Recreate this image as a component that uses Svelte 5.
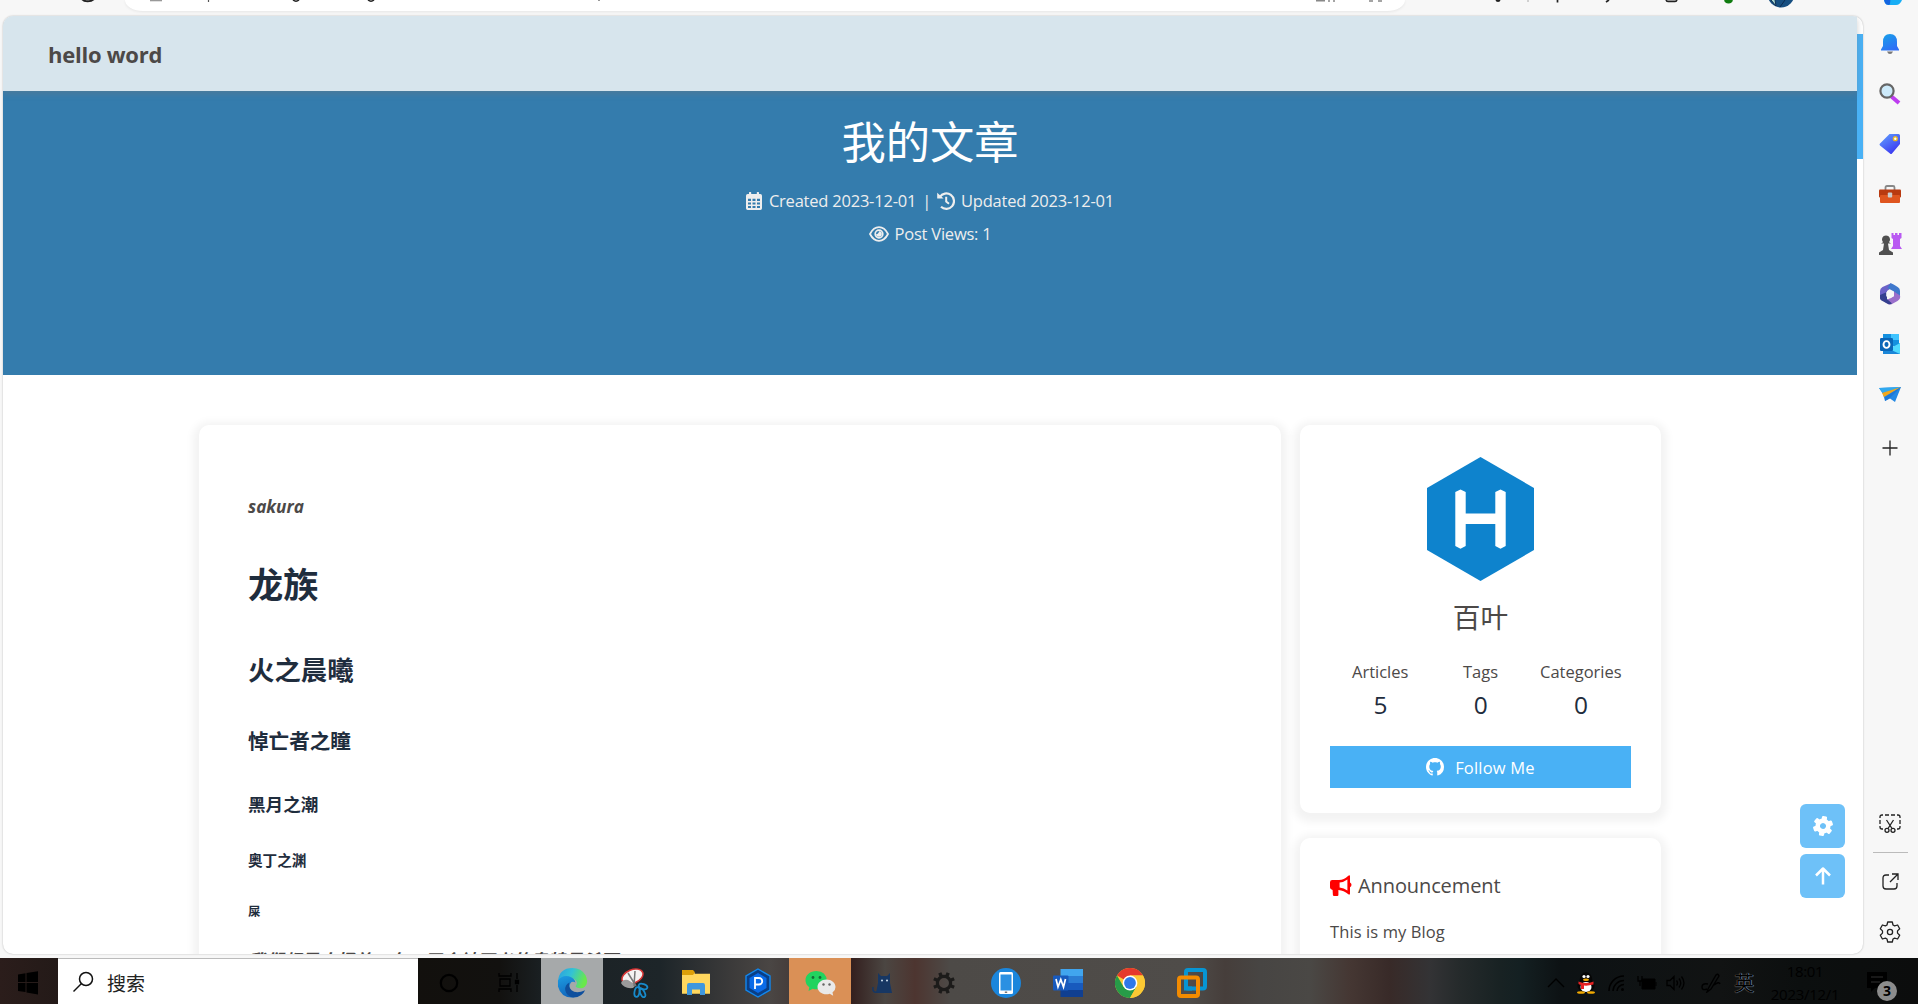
<script>
  const headings = [
    { text: '龙族', level: 'h-1' },
    { text: '火之晨曦', level: 'h-2' },
    { text: '悼亡者之瞳', level: 'h-3' },
    { text: '黑月之潮', level: 'h-4' },
    { text: '奥丁之渊', level: 'h-5' },
    { text: '屎', level: 'h-6' },
  ];
  const stats = [
    { label: 'Articles', value: 5 },
    { label: 'Tags', value: 0 },
    { label: 'Categories', value: 0 },
  ];
  const teeth6 = [0, 60, 120, 180, 240, 300];
  const teeth8 = [0, 45, 90, 135, 180, 225, 270, 315];
</script>

<div class="screen">
  <!-- lower edge of the browser toolbar -->
  <div class="toolbar">
    <svg class="left-tools" width="125" height="16" viewBox="0 0 125 16">
      <path d="M82 -1C84 2 91 2 94 -1" fill="none" stroke="#222" stroke-width="2" />
    </svg>
    <div class="address">
      <svg width="1280" height="11" viewBox="2 0 1280 11">
        <path d="M27 .5h12" stroke="#999" stroke-width="1.6" />
        <path d="M85.500 0v2M476 0v1" stroke="#555" stroke-width="1.200" />
        <path d="M170 0q3 2.500 6 0M245 0q3 2.500 6 0" stroke="#222" stroke-width="1.500" fill="none" />
        <path d="M1193 .8h9M1206 0v2M1211 0v2M1246 1h4M1255 1h4" stroke="#888" stroke-width="1.500" />
      </svg>
    </div>
    <svg class="right-tools" width="513" height="16" viewBox="1405 0 513 16">
      <circle cx="1498" cy="-.5" r="2.500" fill="#222" />
      <path d="M1528 0v2" stroke="#aaa" />
      <path d="M1557.500 0v2.500M1606 2l3-2" stroke="#222" stroke-width="1.700" />
      <path d="M1666 -1q0 2.500 2 2.500h7q2 0 2-2.500" fill="#bbb" stroke="#222" stroke-width="1.500" />
      <circle cx="1728.500" cy="-1" r="4.500" fill="#107c10" />
      <circle cx="1781" cy="-6" r="13.500" fill="#164e80" />
      <path d="M1771 0l5 6l-1-6M1780 7l5-7" fill="#a8d5d0" stroke="#0b2c50" />
      <path d="M1883 -3l2 6q1 2 4 2h7q4 0 6-5l1-3z" fill="#18aef5" />
      <path d="M1883 -3l2 6q1 2 4 2q2-1 1-8z" fill="#1565e0" />
    </svg>
  </div>

  <div class="middle">
    <div class="page">
      <div class="viewport">
        <nav>hello word</nav>
        <header>
          <h1>我的文章</h1>
          <div class="meta">
            <svg class="cal" width="16" height="18" viewBox="0 0 16 18">
              <path fill="#eee" fill-rule="evenodd" d="M1.700 2H3V.6q0-.6.6-.6h1q.6 0 .6.600V2h5.600V.6q0-.6.6-.6h1q.6 0 .6.600V2h1.300Q16 2 16 3.700v12.600Q16 18 14.300 18H1.700Q0 18 0 16.300V3.700Q0 2 1.700 2zM2 6.800v2.200h3V6.800zm4.500 0v2.200h3V6.800zm4.500 0v2.200h3V6.800zM2 10.400v2.200h3v-2.200zm4.500 0v2.200h3v-2.200zm4.500 0v2.200h3v-2.200zM2 14v2h3v-2zm4.500 0v2h3v-2zm4.500 0v2h3v-2z" />
            </svg>
            <span class="created">Created 2023-12-01</span>
            <span class="bar">|</span>
            <svg class="hist" width="18" height="18" viewBox="0 0 18 18" fill="none" stroke="#eee" stroke-width="2.200">
              <path d="M2.800 5A7.700 7.700 0 1 1 4 14.800" />
              <path d="M9.200 4.800V9.500l2.800 2.200" stroke-width="2" />
              <path d="M.2.800L6.600 6.600H.2z" fill="#eee" stroke="none" />
            </svg>
            <span class="updated">Updated 2023-12-01</span>
          </div>
          <div class="meta second">
            <svg class="eye" width="20" height="16" viewBox="0 0 20 16" fill="none" stroke="#eee">
              <path d="M1 8Q4.500 1.200 10 1.200T19 8Q15.500 14.800 10 14.800T1 8z" stroke-width="1.800" />
              <circle cx="10" cy="8" r="3.800" stroke-width="1.700" />
              <path d="M10 5.200A2.800 2.800 0 1 1 7.200 8Q9.800 8 10 5.200z" fill="#eee" stroke="none" />
            </svg>
            <span class="views">Post Views: 1</span>
          </div>
        </header>

        <main>
          <article class="card">
            <p class="lead">sakura</p>
            {#each headings as h}
              <h2 class={h.level}>{h.text}</h2>
            {/each}
            <p class="quote">我们都是小怪兽，有一天会被正义的奥特曼杀死</p>
          </article>
          <aside>
            <section class="card author">
              <svg class="logo" width="107" height="124" viewBox="0 0 107 124">
                <path d="M53.500 0L107 31v62l-53.500 31L0 93V31z" fill="#0e83cd" />
                <path d="M28.300 35l5.200-2.500 5.200 2.500v21.500h29.600V35l5.200-2.500 5.200 2.500v54l-5.200 2.800-5.200-2.800V67H38.700v22l-5.200 2.800-5.200-2.800z" fill="#fff" />
              </svg>
              <div class="name">百叶</div>
              <div class="stats">
                {#each stats as s}
                  <div class="stat"><span>{s.label}</span><b>{s.value}</b></div>
                {/each}
              </div>
              <div class="follow">
                <svg width="18" height="18" viewBox="0 0 16 16" fill="#fff">
                  <path d="M8 0C3.580 0 0 3.580 0 8c0 3.540 2.290 6.530 5.470 7.590.4.070.55-.17.55-.38 0-.19-.01-.82-.01-1.490-2.010.370-2.530-.49-2.690-.94-.09-.23-.48-.94-.82-1.130-.28-.15-.68-.52-.01-.53.630-.01 1.080.580 1.230.820.720 1.210 1.870.870 2.330.660.070-.52.280-.87.510-1.070-1.780-.2-3.640-.89-3.640-3.950 0-.87.310-1.590.820-2.150-.08-.2-.36-1.020.080-2.120 0 0 .67-.21 2.200.820.640-.18 1.320-.27 2-.27s1.360.090 2 .27c1.530-1.040 2.200-.82 2.200-.82.440 1.100.160 1.920.080 2.120.510.560.820 1.270.820 2.150 0 3.070-1.870 3.750-3.650 3.950.290.250.540.730.540 1.480 0 1.070-.01 1.930-.01 2.200 0 .210.150.460.550.380A8.010 8.010 0 0 0 16 8c0-4.420-3.580-8-8-8z" />
                </svg>
                <span>Follow Me</span>
              </div>
            </section>
            <section class="card notice">
              <div class="notice-head">
                <svg width="22" height="21" viewBox="0 0 22 21">
                  <path fill="#f00" fill-rule="evenodd" d="M2.200 5H9Q14 5 18 1q2-1.600 2 .6V7.500q1.500.7 1.500 2.300T20 12.200v6.200q0 2-2 .6Q14 15.500 8.400 15v5q0 1-1 1H4q-1 0-1.100-1L2.600 15Q0 14.600 0 12.600V7.200Q0 5 2.200 5zM17.400 4.400Q14 7 9.600 7.400v5Q14 13 17.400 15.600z" />
                </svg>
                <span>Announcement</span>
              </div>
              <p>This is my Blog</p>
            </section>
          </aside>
        </main>
      </div>
      <div class="scroll"><div class="thumb"></div></div>
      <div class="fab">
        <div class="fab-btn">
          <svg width="24" height="24" viewBox="-12 -12 24 24" fill="#fff">
            {#each teeth6 as a}
              <rect x="-2.600" y="-10" width="5.200" height="6" rx="1.200" transform="rotate({a + 10})" />
            {/each}
            <path fill-rule="evenodd" d="M0-7.500a7.500 7.500 0 1 0 .01 0zM0-3a3 3 0 1 1-.01 0z" />
          </svg>
        </div>
        <div class="fab-btn">
          <svg width="20" height="20" viewBox="0 0 20 20" fill="none" stroke="#fff" stroke-width="2.500">
            <path d="M10 18.500V3M3 9.500L10 2.500l7 7" stroke-linejoin="round" />
          </svg>
        </div>
      </div>
    </div>

    <div class="sidebar">
      <div class="slot">
        <svg width="24" height="24" viewBox="0 0 24 24">
          <defs><linearGradient id="bell" x2=".6" y2="1"><stop stop-color="#17a4e8" /><stop offset="1" stop-color="#2f6df6" /></linearGradient></defs>
          <path d="M12 2Q19 2 19 10v4l2 3.500v1H3v-1L5 14v-4Q5 2 12 2z" fill="url(#bell)" />
          <path d="M9 19.500h6Q14 22 12 22t-3-2.500z" fill="#777" />
        </svg>
      </div>
      <div class="slot">
        <svg width="24" height="24" viewBox="0 0 24 24">
          <path d="M13.500 14.500l7.500 6.500" stroke="#bd3cf0" stroke-width="4" />
          <circle cx="9" cy="9" r="6.600" fill="#cdeafa" stroke="#666" stroke-width="2.200" />
        </svg>
      </div>
      <div class="slot">
        <svg width="24" height="24" viewBox="0 0 24 24">
          <defs><linearGradient id="tag" x2=".7" y2="1"><stop stop-color="#62a5ff" /><stop offset="1" stop-color="#3a35f0" /></linearGradient></defs>
          <path d="M11.500 2h9Q22 2 22 3.500v8.500l-8 9.500q-1 1-2 0L2 13.500q-1-1 0-2z" fill="url(#tag)" />
          <circle cx="17.300" cy="6.700" r="1.900" fill="#fff" stroke="#e6b72a" stroke-width="1.400" />
        </svg>
      </div>
      <div class="slot">
        <svg width="24" height="24" viewBox="0 0 24 24">
          <path d="M7.500 8V5.500Q7.500 4 9 4h6q1.500 0 1.500 1.500V8" fill="none" stroke="#888" stroke-width="1.800" />
          <rect x="1" y="7.500" width="22" height="8" rx="1" fill="#b93a10" />
          <rect x="2" y="13" width="20" height="8" rx="1" fill="#df551f" />
          <rect x="9.800" y="10.500" width="4.400" height="5" rx="1" fill="#ccc" />
        </svg>
      </div>
      <div class="slot">
        <svg width="24" height="24" viewBox="0 0 24 24">
          <path d="M13.500 1v5l1.500 1v7l-2 3h11l-2-3V7l1.500-1V1h-2.500v2h-1.500V1h-2.500v2h-1.500V1z" fill="#b95af2" />
          <path d="M8 3.500a4 4 0 0 1 3 6.700l2 1.300h-3l1 6.500 4 2.500V23H1v-2.500L5 18l1-6.500H3l2-1.300a4 4 0 0 1 3-6.700z" fill="#505050" />
        </svg>
      </div>
      <div class="slot">
        <svg width="24" height="24" viewBox="0 0 24 24">
          <path d="M13 1.300L4.500 5Q2 6.500 2 9v8l7-3.500V9l5-3.500z" fill="#6b62c8" />
          <path d="M12.500 1.200q1.500 0 7.500 4Q22 6.500 22 9v6.500l-6-3V9.500L9.500 6z" fill="#3f78cc" />
          <path d="M22 13.500q1 3-2.500 5.500L14 22q-2 1.200-4 0l-4-2.500 10-5.500V9.500z" fill="#9a6fcb" />
          <path d="M2 13v3q0 1.500 1.500 2.500L10 22q2 .8 4-.5l-5-4.500V10z" fill="#35408f" />
          <path d="M12 8l3.800 2.200v4L12 16.500l-3.800-2.300v-4z" fill="#f7f7f7" />
        </svg>
      </div>
      <div class="slot">
        <svg width="24" height="24" viewBox="0 0 24 24">
          <rect x="5" y="2" width="16" height="12" fill="#1490df" /><rect x="13" y="2" width="8" height="6" fill="#40c4ff" />
          <path d="M5 12l8 4 9-5v11H5z" fill="#1a86d8" /><path d="M22 11v11L11 17z" fill="#50d9ff" />
          <rect x="2" y="6" width="13" height="13" rx="1.200" fill="#0a66b8" />
          <ellipse cx="8.500" cy="12.500" rx="3" ry="3.400" fill="none" stroke="#fff" stroke-width="1.900" />
        </svg>
      </div>
      <div class="slot">
        <svg width="24" height="24" viewBox="0 0 24 24">
          <path d="M1 6l22-1-6 15-5-3.500L7 19l-2-7z" fill="#2489e4" />
          <path d="M23 5L5 11 1 6z" fill="#31a9ef" /><path d="M23 5L4 11l2 4z" fill="#f2a71b" /><path d="M23 5L7 15v4l5-3z" fill="#1e78d8" />
        </svg>
      </div>
      <div class="slot plus">
        <svg width="16" height="16" viewBox="0 0 16 16" stroke="#222" stroke-width="1.300"><path d="M8 .5v15M.5 8h15" /></svg>
      </div>
      <div class="spacer"></div>
      <div class="slot snip">
        <svg width="22" height="20" viewBox="0 0 22 20" fill="none" stroke="#222" stroke-width="1.300">
          <path d="M4 1h-1Q1 1 1 3v1M6 1h4M12 1h4M18 1h1q2 0 2 2v1M1 6v4M21 6v4M1 12v1q0 2 2 2h1M21 12v1q0 2-2 2h-1" />
          <path d="M7.500 6l5.500 8.500M14.500 6L9 14.500" /><circle cx="8" cy="16.300" r="2" /><circle cx="14" cy="16.300" r="2" />
        </svg>
      </div>
      <div class="rule"></div>
      <div class="slot out">
        <svg width="17" height="17" viewBox="0 0 17 17" fill="none" stroke="#222" stroke-width="1.300">
          <path d="M7 2H4Q1 2 1 5v8q0 3 3 3h8q3 0 3-3v-3M10 1h6v6M16 1L8 9" />
        </svg>
      </div>
      <div class="slot prefs">
        <svg width="22" height="22" viewBox="0 0 22 22" fill="none" stroke="#222" stroke-width="1.300" stroke-linejoin="round">
          <path d="M8.700 1h4.600l.7 3 1.600.9 3-.9 2.100 3.800-2.200 2.100v2.200l2.200 2.100-2.100 3.800-3-.9-1.600.9-.7 3H8.700l-.7-3-1.600-.9-3 .9-2.100-3.800 2.200-2.100V9.900L1.300 7.800 3.400 4l3 .9L8 4z" />
          <circle cx="11" cy="11" r="2.600" />
        </svg>
      </div>
    </div>
  </div>

  <div class="taskbar">
    <div class="start">
      <svg width="20" height="26" viewBox="0 0 20 26"><path d="M0 4.500L7.500 3.300V12H0zM8.500 3.100L20 1.300V12H8.500zM0 13h7.500v9L0 21zM8.500 13H20v11.500L8.500 22.500z" fill="#000" /></svg>
    </div>
    <div class="search">
      <svg width="22" height="22" viewBox="0 0 22 22" fill="none" stroke="#111" stroke-width="1.500"><circle cx="14" cy="8" r="6.500" /><path d="M9.500 12.500L1.500 20.500" /></svg>
      <span>搜索</span>
    </div>
    <div class="tile">
      <svg width="20" height="20" viewBox="0 0 20 20"><circle cx="10" cy="10" r="8.200" fill="none" stroke="#000" stroke-width="2.200" /></svg>
    </div>
    <div class="tile view">
      <svg width="22" height="22" viewBox="0 0 22 22" fill="none" stroke="#000" stroke-width="1.300"><path d="M1 1v3h12V1M1 20v-3h12v3M2 7h10v7H2zM19 1v6M19 13v7" /><path d="M17.500 8.500h3v3h-3z" fill="#000" /></svg>
    </div>
    <div class="tile active">
      <svg width="31" height="31" viewBox="0 0 32 32">
        <defs>
          <linearGradient id="e1" x2="1" y2=".3"><stop stop-color="#2a9fe0" /><stop offset=".5" stop-color="#33c2d5" /><stop offset="1" stop-color="#69e84c" /></linearGradient>
          <linearGradient id="e2" y2="1" x2=".3"><stop stop-color="#1d9de2" /><stop offset="1" stop-color="#1167bd" /></linearGradient>
        </defs>
        <path d="M1 15Q2 1 16 1q9 0 13.500 7.500Q33 16 29 20q-3 3-8 1.500-3-1-1-3 2-4-3-6.500Q8 8 1 15z" fill="url(#e1)" />
        <path d="M1 14Q5 8 12 9.500q6 1.500 7 6.500-2-1.500-4-.5-3 3-1.500 7.500Q16 29 23 29q-4 3-8 2.500Q4 31 1 20z" fill="url(#e2)" />
        <path d="M13 16q-2 4 2 8 5 4 14 0-3 7-12 7.600-7-1-8.500-7.600Q8 18 13 16z" fill="#0f4f9d" />
      </svg>
    </div>
    <div class="tile">
      <svg width="30" height="30" viewBox="0 0 30 30">
        <ellipse cx="13.500" cy="8.500" rx="11" ry="6.800" transform="rotate(-22 13.500 8.500)" fill="#f5f2f2" stroke="#d73535" stroke-width="1.500" />
        <path d="M2 15q2-4 7-3l8 5-3 3q-9 1-12-5z" fill="#9b9b9b" />
        <path d="M9 5l8 13M16 3l-1 15" stroke="#777" stroke-width="1.500" />
        <ellipse cx="24" cy="18.500" rx="4.500" ry="2.500" transform="rotate(20 24 18.500)" fill="none" stroke="#178acb" stroke-width="1.800" />
        <ellipse cx="18" cy="24" rx="2.500" ry="5" transform="rotate(10 18 24)" fill="none" stroke="#178acb" stroke-width="1.800" />
        <ellipse cx="23.500" cy="25" rx="2.200" ry="4.500" transform="rotate(-25 23.500 25)" fill="none" stroke="#178acb" stroke-width="1.800" />
      </svg>
    </div>
    <div class="tile">
      <svg width="28" height="26" viewBox="0 0 28 24" preserveAspectRatio="none">
        <path d="M0 1h11l2 2.500H28V22H0z" fill="#ffd75e" /><path d="M0 0h11l2 2-2 2.500H0z" fill="#dda009" />
        <path d="M5 23V14q0-2 2-2h14q2 0 2 2v9h-5v-5h-8v5z" fill="#3f97dd" />
      </svg>
    </div>
    <div class="tile">
      <svg width="28" height="30" viewBox="0 0 28 30">
        <path d="M14 1l12 7v14l-12 7-12-7V8z" fill="#0a3f86" stroke="#1187ee" stroke-width="1.400" />
        <path d="M14 5l8.500 5v10L14 25l-8.500-5V10z" fill="#0a6be8" />
        <path d="M11 21V10h4a3 3 0 0 1 0 6.500h-4" fill="none" stroke="#fff" stroke-width="1.800" />
      </svg>
    </div>
    <div class="tile wechat">
      <svg width="31" height="26" viewBox="0 0 31 26">
        <path d="M11.500 1C5 1 .5 5 .5 10.200q0 4.300 3.800 7L3.500 21l4.200-2.200q2 .6 4.500.5L22 11Q21 1 11.500 1z" fill="#22d35f" />
        <circle cx="8" cy="7.500" r="1.400" fill="#176d37" /><circle cx="15" cy="7.500" r="1.400" fill="#176d37" />
        <path d="M21.500 9.500c5 0 9 3.300 9 7.500q0 3.500-3 5.600l.7 3.100-3.500-1.900q-1.500.5-3.200.5c-5 0-9-3.200-9-7.300s4-7.500 9-7.500z" fill="#e9e9e9" />
        <circle cx="18.500" cy="14.500" r="1.200" fill="#666" /><circle cx="24.500" cy="14.500" r="1.200" fill="#666" />
      </svg>
    </div>
    <div class="tile">
      <svg width="22" height="22" viewBox="0 0 22 22">
        <path d="M7 1l3 3h6l3-3v10l2 10H5L7 11z" fill="#173763" /><path d="M6 20Q1 21 2 15" fill="none" stroke="#173763" stroke-width="1.500" />
        <circle cx="11" cy="8.500" r="1" fill="#cde" /><circle cx="16" cy="8.500" r="1" fill="#cde" />
      </svg>
    </div>
    <div class="tile">
      <svg width="24" height="24" viewBox="-12 -12 24 24">
        {#each teeth8 as a}
          <rect x="-1.700" y="-11" width="3.400" height="5" fill="#1c1b1a" transform="rotate({a + 22.5})" />
        {/each}
        <circle r="6.600" fill="none" stroke="#1c1b1a" stroke-width="3.200" />
      </svg>
    </div>
    <div class="tile">
      <svg width="30" height="30" viewBox="0 0 30 30">
        <circle cx="15" cy="15" r="15" fill="#1b86dc" /><rect x="8" y="4" width="14" height="22" rx="1.500" fill="#fff" />
        <rect x="9.500" y="6.500" width="11" height="16" fill="#2b90e2" /><rect x="13.800" y="23.500" width="2.400" height="1.500" fill="#777" />
      </svg>
    </div>
    <div class="tile">
      <svg width="30" height="28" viewBox="0 0 30 28">
        <path d="M7.500 0H30v7H7.500z" fill="#41a5ee" /><path d="M7.500 7H30v7H7.500z" fill="#2b7cd3" /><path d="M7.500 14H30v7H7.500z" fill="#185abd" /><path d="M7.500 21H30v7H7.500z" fill="#103f91" />
        <rect y="6.500" width="15.500" height="15" rx="1" fill="#185abd" />
        <path d="M3 10l2 8 2.800-7.500L10.500 18l2-8" fill="none" stroke="#fff" stroke-width="1.700" />
      </svg>
    </div>
    <div class="tile">
      <svg width="30" height="30" viewBox="0 0 30 30">
        <circle cx="15" cy="15" r="15" fill="#fcc934" />
        <path d="M15 15L2 7.500A15 15 0 0 1 28 7.500H15z" fill="#e5392c" />
        <path d="M2 7.500A15 15 0 0 0 15 30l6.500-11.200L8.500 18.700z" fill="#279b48" />
        <path d="M15 7.500h13A15 15 0 0 1 15 30l6.500-11.200z" fill="#fcc934" />
        <circle cx="15" cy="15" r="7.400" fill="#fff" /><circle cx="15" cy="15" r="5.900" fill="#2f78e8" />
      </svg>
    </div>
    <div class="tile">
      <svg width="30" height="30" viewBox="0 0 30 30" fill="none" stroke-width="4">
        <rect x="9" y="2" width="19" height="18.500" rx="2" stroke="#0795d3" />
        <rect x="2" y="9.500" width="19" height="18.500" rx="2" stroke="#f38b00" />
        <path d="M9 13v7.500h6" stroke="#0795d3" />
      </svg>
    </div>
    <div class="tray">
      <svg class="chev" width="18" height="12" viewBox="0 0 18 12" fill="none" stroke="#000" stroke-width="1.400"><path d="M1 10L9 2l8 8" /></svg>
      <svg class="qq" width="20" height="22" viewBox="0 0 20 22">
        <ellipse cx="10" cy="8" rx="6.300" ry="7.700" fill="#060606" /><ellipse cx="10" cy="14" rx="8.500" ry="6.500" fill="#060606" />
        <ellipse cx="10" cy="15" rx="5.500" ry="5" fill="#fff" />
        <circle cx="8" cy="4.500" r="1.600" fill="#fff" /><circle cx="12" cy="4.500" r="1.600" fill="#fff" />
        <ellipse cx="10" cy="7.700" rx="3" ry="1.200" fill="#f2a900" />
        <path d="M2.500 9.500q7.500 3 15 0v3Q12 14 8 13.500V17H5v-4q-2-.5-2.500-1z" fill="#e52222" />
        <ellipse cx="5" cy="20.500" rx="4" ry="1.300" fill="#f2a900" /><ellipse cx="15" cy="20.500" rx="4" ry="1.300" fill="#f2a900" />
      </svg>
      <svg class="wifi" width="18" height="18" viewBox="0 0 18 18" fill="none" stroke="#000" stroke-width="1.500"><path d="M1 17A15 15 0 0 1 16 2M5 17A11 11 0 0 1 16 6.500M9 17a7 7 0 0 1 7-6.500" /><circle cx="14.500" cy="15.500" r="1.500" fill="#000" stroke="none" /></svg>
      <svg class="batt" width="20" height="14" viewBox="0 0 20 14"><path d="M5 3h13v10H5zM19 6v4" fill="#000" stroke="#000" /><path d="M1 0v5h4V0M3 5v5" fill="none" stroke="#000" stroke-width="1.300" /></svg>
      <svg class="vol" width="19" height="16" viewBox="0 0 19 16" fill="none" stroke="#000" stroke-width="1.300"><path d="M1 5.500h3L8 1.500v13l-4-4H1zM10.500 5.500q2 2.500 0 5M13 3.500q3.500 4.500 0 9M15.500 1.500q5 6.500 0 13" /></svg>
      <svg class="pen" width="20" height="20" viewBox="0 0 20 20" fill="none" stroke="#000" stroke-width="1.400"><path d="M7 16L15 2q2-2 3 1L10 16l-4 3zM7 11q-6-1-6 3t5 2M13 12q5-4 6-1" /></svg>
      <span class="ime">英</span>
      <div class="clock"><span>18:01</span><span>2023/12/1</span></div>
      <div class="center">
        <svg width="20" height="21" viewBox="0 0 20 21"><path d="M0 0h20v16H8l-4 4v-4H0z" fill="#000" /><path d="M4 5h12M4 10h9" stroke="#202121" stroke-width="1.500" /></svg>
        <span class="badge">3</span>
      </div>
    </div>
  </div>
</div>

<style>
  :global(body) { margin: 0; overflow: hidden; }
  .screen {
    width: 1918px; height: 1004px; display: flex; flex-direction: column; overflow: hidden;
    background: #f7f7f7; color: #4c4948;
    font-family: 'Open Sans', 'Noto Sans CJK SC', sans-serif; font-size: 16.500px;
  }
  svg { display: block; flex: none; }
  .toolbar { display: flex; height: 16px; flex: none; }
  .address { width: 1280px; height: 11px; background: #fff; border-radius: 0 0 18px 18px / 0 0 11px 11px; box-shadow: 0 1px 3px rgba(0, 0, 0, .07); }
  .middle { display: flex; height: 942px; flex: none; }
  .page {
    position: relative; display: flex; box-sizing: border-box; width: 1860px; height: 938px; margin-left: 3px;
    background: #fff; border-radius: 10px; overflow: hidden; flex: none;
    box-shadow: 0 0 2px rgba(0, 0, 0, .28);
  }
  .viewport { width: 1854px; }
  nav {
    position: relative; height: 75px; box-sizing: border-box; padding-left: 45px; line-height: 77px;
    background: #d7e5ed; color: #4c4948; font-weight: 700; font-size: 22px; letter-spacing: -.25px;
    box-shadow: 0 3px 6px rgba(120, 120, 120, .35);
  }
  header { height: 284px; background: #347cad; color: #eee; display: flex; flex-direction: column; align-items: center; }
  h1 { margin: 17px 0 0; color: #fff; font-weight: 400; font-size: 44.300px; line-height: 64px; font-family: 'Noto Sans CJK SC', sans-serif; }
  .meta { display: flex; align-items: center; height: 33px; margin-top: 12px; white-space: pre; letter-spacing: -.22px; }
  .second { margin-top: 0; }
  .created { margin-left: 7px; }
  .bar { margin: 0 6px; }
  .updated { margin-left: 6px; }
  .views { margin-left: 6px; }
  main { display: flex; align-items: flex-start; gap: 19px; padding: 50px 0 0 196px; }
  .card { background: #fff; border-radius: 10px; box-shadow: 0 3px 8px 6px rgba(7, 17, 27, .05); box-sizing: border-box; }
  article { width: 1082px; height: 700px; padding: 62px 50px 0 49px; }
  p, h2 { margin: 0; white-space: nowrap; }
  .lead { height: 40px; line-height: 39px; font-weight: 700; font-style: italic; font-size: 17.200px; }
  h2 { color: #1f2d3d; font-weight: 700; font-family: 'Noto Sans CJK SC', sans-serif; }
  .h-1 { margin-top: 31px; font-size: 35.200px; line-height: 50px; }
  .h-2 { margin-top: 41px; font-size: 26.400px; line-height: 40px; }
  .h-3 { margin-top: 36px; font-size: 20.600px; line-height: 30px; }
  .h-4 { margin-top: 34px; font-size: 17.600px; line-height: 30px; }
  .h-5 { margin-top: 31px; font-size: 14.600px; line-height: 20px; }
  .h-6 { margin-top: 31px; font-size: 12.300px; line-height: 20px; }
  .quote { margin-top: 24px; font-size: 17.600px; line-height: 30px; font-weight: 700; font-style: italic; font-family: 'Noto Sans CJK SC', sans-serif; }
  aside { width: 361px; }
  .author { height: 388px; padding: 32px 30px 0; display: flex; flex-direction: column; align-items: center; }
  .name { margin-top: 15px; font-size: 27.700px; line-height: 40px; font-family: 'Noto Sans CJK SC', sans-serif; }
  .stats { display: flex; width: 301px; margin-top: 20px; }
  .stat { flex: 1 1 0; display: flex; flex-direction: column; align-items: center; }
  .stat span { line-height: 32px; }
  .stat b { font-weight: 400; font-size: 24.500px; line-height: 34px; color: #1f2d3d; letter-spacing: -.5px; }
  .follow { display: flex; align-items: center; justify-content: center; gap: 11px; width: 301px; height: 42px; margin-top: 24px; background: #49b1f5; color: #fff; letter-spacing: .2px; }
  .notice { height: 300px; margin-top: 25px; padding: 32px 30px 0; }
  .notice-head { display: flex; align-items: center; gap: 6px; height: 30px; font-size: 20px; letter-spacing: -.1px; }
  .notice p { margin-top: 16px; line-height: 32px; letter-spacing: .1px; }
  .scroll { width: 6px; padding-top: 18px; }
  .thumb { height: 125px; background: #49b1f5; }
  .fab { position: absolute; right: 18px; bottom: 56px; display: flex; flex-direction: column; gap: 6px; }
  .fab-btn { display: flex; align-items: center; justify-content: center; width: 45px; height: 44px; border-radius: 6px; background: #6ec1f8; }
  .sidebar { display: flex; flex-direction: column; align-items: center; width: 55px; height: 942px; padding: 3px 1px 2px 0; box-sizing: border-box; }
  .slot { display: flex; align-items: center; justify-content: center; width: 50px; height: 50px; flex: none; }
  .plus { height: 58px; }
  .spacer { flex: 1; }
  .snip { height: 56px; }
  .rule { width: 35px; height: 1px; background: #bbb; flex: none; }
  .out { height: 56px; }
  .prefs { height: 46px; padding-bottom: 1px; }
  .taskbar {
    display: flex; height: 46px; flex: none;
    background: linear-gradient(90deg, #2b1d1b 0, #231a18 60px, #12100d 418px, #12110f 500px, #1b2124 545px, #1d2529 660px, #3b3a3a 730px, #4a4644 770px, #34201f 852px, #4b4642 885px, #4d3530 915px, #4d4a47 950px, #4f4c49 1190px, #463e3b 1225px, #474543 1260px, #4a4845 1310px, #453733 1350px, #382a28 1390px, #333335 1430px, #252a2b 1460px, #182223 1500px, #142022 1520px, #0d1214 1560px, #111313 1720px, #0c0f0f 1800px, #0c0d0d 1918px);
  }
  .start { display: flex; align-items: center; padding-left: 18px; width: 40px; padding-top: 4px; }
  .search { display: flex; align-items: center; box-sizing: border-box; width: 360px; padding-left: 14px; gap: 13px; background: #fff; border-top: 1px solid #bbb; color: #222; font-family: 'Noto Sans CJK SC', sans-serif; font-size: 19px; padding-top: 1px; }
  .tile { display: flex; align-items: center; justify-content: center; width: 62px; padding-top: 3px; box-sizing: border-box; height: 46px; flex: none; }
  .view { width: 61px; padding-right: 3px; }
  .active { background: #a6a9aa; }
  .wechat { background: #da9056; }
  .tray { display: flex; align-items: center; margin-left: 324px; height: 46px; padding-top: 3px; box-sizing: border-box; }
  .qq { margin-left: 11px; }
  .wifi { margin-left: 12px; }
  .batt { margin-left: 11px; }
  .vol { margin-left: 9px; }
  .pen { margin-left: 16px; }
  .ime { margin-left: 13px; width: 21px; font-family: 'Noto Sans CJK SC', sans-serif; font-size: 20px; line-height: 24px; color: #000; text-shadow: 0 0 1px #a9bccf, 1px 0 0 #4d5a68; }
  .clock { display: flex; flex-direction: column; align-items: center; width: 74px; margin-left: 13px; font-size: 15px; line-height: 23px; color: #000; letter-spacing: -.3px; }
  .center { position: relative; margin-left: 25px; width: 20px; height: 21px; }
  .badge { position: absolute; left: 10px; top: 9px; width: 20px; height: 20px; border-radius: 50%; background: #8c8c8c; color: #000; font-size: 14px; font-weight: 700; line-height: 20px; text-align: center; }
</style>
